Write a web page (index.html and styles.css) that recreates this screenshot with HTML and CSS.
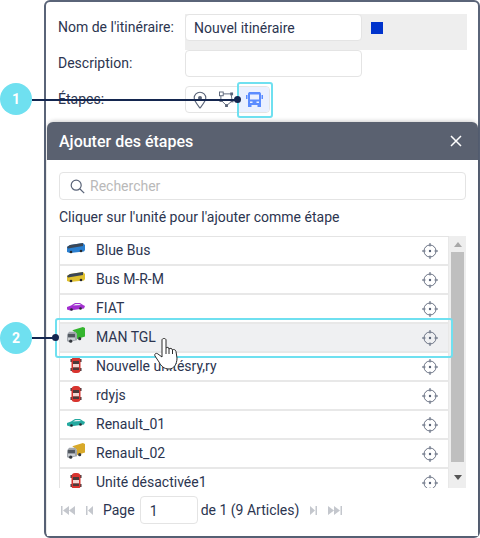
FILE: index.html
```html
<!doctype html>
<html lang="fr">
  <head>
    <meta charset="UTF-8" />
    <title>Ajouter des étapes</title>
    <link rel="stylesheet" href="styles.css">
  </head>

  <body>
    <svg class="defs" width="0" height="0">
      <symbol id="target" viewBox="0 0 16 16">
        <circle cx="8" cy="8" r="6" fill="none" stroke="#6a7284" stroke-width="1" />
        <circle cx="8" cy="8" r="1.2" fill="#5a6478" />
        <path d="M8 0v3.5M8 12.5V16M0 8h3.5M12.5 8H16" stroke="#5a6478" stroke-width="1" />
      </symbol>
      <symbol id="car-top" viewBox="0 0 12 18">
        <rect x="0.500" y="3" width="1.500" height="3" fill="#33373d" />
        <rect x="10" y="3" width="1.500" height="3" fill="#33373d" />
        <rect x="0.500" y="12" width="1.500" height="3" fill="#33373d" />
        <rect x="10" y="12" width="1.500" height="3" fill="#33373d" />
        <rect x="1.500" y="1" width="9" height="16" rx="3.500" fill="#d8342f" />
        <rect x="3" y="5" width="6" height="3" fill="#4b3a3a" />
        <rect x="3" y="8" width="6" height="3.500" fill="#f3d6d2" />
        <rect x="3" y="11.500" width="6" height="2.500" fill="#4b3a3a" />
      </symbol>
      <symbol id="truck" viewBox="0 0 17 15">
        <path d="M5 3L15 0l2 1v8L9 11.500V6z" fill="var(--load)" />
        <path d="M0 7l2-2.500h6L9.500 7v5.500L1 14l-1-1z" fill="#a2a7ae" />
        <rect x="1" y="6.500" width="6.500" height="3" fill="#50565e" />
        <rect x="1" y="10.500" width="6.500" height="1.500" fill="#d5d8dc" />
        <circle cx="3.500" cy="13.300" r="1.500" fill="#33373d" />
        <circle cx="12" cy="11" r="1.500" fill="#33373d" />
      </symbol>
      <symbol id="bus" viewBox="0 0 18 12">
        <path d="M0 5l3-2 13-2 2 2v5l-1 1.500-14 1.500-3-1z" fill="var(--body)" />
        <path d="M0 5l3-2 13-2v3L1 6.500z" fill="#3a4656" />
        <circle cx="4" cy="10" r="1.300" fill="#25282d" />
        <circle cx="14" cy="9" r="1.300" fill="#25282d" />
      </symbol>
      <symbol id="car-side" viewBox="0 0 18 10">
        <path d="M0 6l4-1.500L8 2h5l3 2 2 1-1 2.500L3 9.500 0 8.500z" fill="var(--body)" />
        <path d="M6 4.500L8.500 3h4l1.500 1z" fill="#e8f0f4" />
        <circle cx="4.500" cy="8.500" r="1.300" fill="#25282d" />
        <circle cx="13.500" cy="7.500" r="1.300" fill="#25282d" />
      </symbol>
    </svg>

    <div class="frame">
      <form class="route-form">
        <div class="form-row form-row--name">
          <label class="form-label">Nom de l'itinéraire:</label>
          <div class="name-band">
            <div class="text-field">Nouvel itinéraire</div>
            <span class="color-square"></span>
          </div>
        </div>
        <div class="form-row form-row--desc">
          <label class="form-label">Description:</label>
          <div class="text-field"></div>
        </div>
        <div class="form-row">
          <label class="form-label">Étapes:</label>
          <div class="step-group">
            <span class="step-btn step-btn--pin">
              <svg width="14" height="18" viewBox="0 0 14 18">
                <path d="M7 17C4 13 1.200 10 1.200 7a5.800 5.800 0 0 1 11.600 0C12.800 10 10 13 7 17z" fill="none" stroke="#5a6478" stroke-width="1.100" />
                <circle cx="7" cy="7" r="2" fill="#5a6478" />
              </svg>
            </span>
            <span class="step-btn">
              <svg width="15" height="17" viewBox="0 0 16 17">
                <path d="M2 2.500h11M2 4v5l6 6 6-5-1-7" fill="none" stroke="#5a6478" stroke-width="1" />
                <rect x="0.500" y="0.500" width="4" height="4" fill="#fff" stroke="#5a6478" />
                <rect x="12" y="1" width="3" height="3" fill="#5a6478" />
                <rect x="0.500" y="8" width="3" height="3" fill="#5a6478" />
                <rect x="6.500" y="13.500" width="3" height="3" fill="#5a6478" />
                <rect x="12.500" y="8.500" width="3" height="3" fill="#5a6478" />
              </svg>
            </span>
            <span class="step-btn step-btn--active">
              <svg width="17" height="15" viewBox="0 0 17 15">
                <path d="M3 0h11l1 1.500V15h-3.500v-2h-6v2H2V1.500zM4 2.500V7.500h9V2.500zM4 9.500v1.500h2.500V9.500zM10.500 9.500v1.500H13V9.500z" fill="#5b8cff" fill-rule="evenodd" />
                <path d="M0 3h1.500v4H0zM15.500 3H17v4h-1.500z" fill="#5b8cff" />
              </svg>
            </span>
          </div>
        </div>
      </form>

      <section class="dialog">
        <header class="dialog-head">
          <h2 class="dialog-title">Ajouter des étapes</h2>
          <svg class="dialog-close" width="12" height="12" viewBox="0 0 12 12">
            <path d="M1 1l10 10M11 1L1 11" stroke="#fff" stroke-width="1.500" />
          </svg>
        </header>

        <div class="dialog-body">
          <div class="search">
            <svg width="15" height="15" viewBox="0 0 15 15">
              <circle cx="6.200" cy="6.200" r="5" fill="none" stroke="#5a6478" stroke-width="1.200" />
              <path d="M10 10l4.200 4.200" stroke="#5a6478" stroke-width="1.200" />
            </svg>
            <span>Rechercher</span>
          </div>

          <p class="hint">Cliquer sur l'unité pour l'ajouter comme étape</p>

          <div class="unit-list">
            <ul class="units">
              <li class="unit">
                <svg class="unit-icon" style="--body:#2a7fd0"><use href="#bus" /></svg>
                <span class="unit-name">Blue Bus</span>
                <svg class="unit-target"><use href="#target" /></svg>
              </li>
              <li class="unit">
                <svg class="unit-icon" style="--body:#e0c02e"><use href="#bus" /></svg>
                <span class="unit-name">Bus M-R-M</span>
                <svg class="unit-target"><use href="#target" /></svg>
              </li>
              <li class="unit">
                <svg class="unit-icon" style="--body:#a22fd0"><use href="#car-side" /></svg>
                <span class="unit-name">FIAT</span>
                <svg class="unit-target"><use href="#target" /></svg>
              </li>
              <li class="unit unit--hover">
                <svg class="unit-icon" style="--load:#35b52f"><use href="#truck" /></svg>
                <span class="unit-name">MAN TGL</span>
                <svg class="unit-target"><use href="#target" /></svg>
              </li>
              <li class="unit">
                <svg class="unit-icon unit-icon--top"><use href="#car-top" /></svg>
                <span class="unit-name">Nouvelle unitésry,ry</span>
                <svg class="unit-target"><use href="#target" /></svg>
              </li>
              <li class="unit">
                <svg class="unit-icon unit-icon--top"><use href="#car-top" /></svg>
                <span class="unit-name">rdyjs</span>
                <svg class="unit-target"><use href="#target" /></svg>
              </li>
              <li class="unit">
                <svg class="unit-icon" style="--body:#25a9a0"><use href="#car-side" /></svg>
                <span class="unit-name">Renault_01</span>
                <svg class="unit-target"><use href="#target" /></svg>
              </li>
              <li class="unit">
                <svg class="unit-icon" style="--load:#d8a92a"><use href="#truck" /></svg>
                <span class="unit-name">Renault_02</span>
                <svg class="unit-target"><use href="#target" /></svg>
              </li>
              <li class="unit">
                <svg class="unit-icon unit-icon--top"><use href="#car-top" /></svg>
                <span class="unit-name">Unité désactivée1</span>
                <svg class="unit-target"><use href="#target" /></svg>
              </li>
            </ul>
            <div class="scrollbar">
              <span class="scroll-arrow scroll-arrow--up"></span>
              <span class="scroll-thumb"></span>
              <span class="scroll-arrow scroll-arrow--down"></span>
            </div>
          </div>

          <div class="pager">
            <svg class="pager-icon pager-icon--wide" viewBox="0 0 14 9"><path d="M0 0h1.500v9H0zM8 0v9L2 4.500zM14 0v9L8 4.500z" /></svg>
            <svg class="pager-icon pager-icon--prev" viewBox="0 0 7 9"><path d="M0 0h1.500v9H0zM7 0v9L2 4.500z" /></svg>
            <span class="pager-page">Page</span>
            <div class="pager-input">1</div>
            <span class="pager-total">de 1 (9 Articles)</span>
            <svg class="pager-icon pager-icon--next" viewBox="0 0 7 9"><path d="M7 0H5.500v9H7zM0 0v9l5-4.500z" /></svg>
            <svg class="pager-icon pager-icon--wide" viewBox="0 0 14 9"><path d="M14 0h-1.500v9H14zM6 0v9l6-4.500zM0 0v9l6-4.500z" /></svg>
          </div>
        </div>
      </section>
    </div>

    <!-- callouts drawn over the screenshot -->
    <div class="mark mark--steps"></div>
    <div class="mark mark--row"></div>

    <span class="badge badge--one">1</span>
    <span class="leader leader--one"></span>
    <span class="dot dot--one"></span>

    <span class="badge badge--two">2</span>
    <span class="leader leader--two"></span>
    <span class="dot dot--two"></span>

    <svg class="hand" width="24" height="32" viewBox="0 0 24 32">
      <path d="M8 2C8 0 12 0 12 2V10C13 9 15 9 15 11C16 10 18 10 18.500 12C19.500 11 21.500 11.500 22 13.500L23 20C23 26 20 31 15 31C10 31 7 28 5 24L1 18C0 16 2 14.500 4 16L8 19Z" fill="#fff" stroke="#2a2a2a" stroke-width="1" />
      <path d="M12 10V16M15 11V16M18.500 12V16" stroke="#2a2a2a" stroke-width="1" fill="none" />
    </svg>
  </body>
</html>
```

FILE: styles.css
```css
* {
  box-sizing: border-box;
}

:root {
  --slate: #5a6478;
  --cyan: #6fe0f0;
  --navy: #14264f;
  --line: #e4e4e4;
  --text: #2c3550;
}

body {
  position: relative;
  width: 480px;
  height: 538px;
  margin: 0;
  overflow: hidden;
  background-color: #fff;
  color: var(--text);
  font-family: Roboto, sans-serif;
  font-size: 14px;
}

.defs {
  position: absolute;
}

.frame {
  display: flex;
  flex-direction: column;
  width: 436px;
  height: 538px;
  margin-left: 44px;
  border: 2px solid var(--slate);
  border-radius: 6px;
}

.route-form {
  height: 120px;
  padding: 12px 0 0 12px;
}

.form-row {
  display: flex;
  height: 27px;
}

.form-row--name {
  height: 36px;
}

.form-row--desc {
  margin-bottom: 9px;
}

.form-label {
  width: 127px;
  padding-top: 4px;
  line-height: 18px;
}

.name-band {
  display: flex;
  align-items: flex-start;
  gap: 9px;
  width: 282px;
  background-color: #eeeeee;
}

.color-square {
  width: 12px;
  height: 12px;
  margin-top: 8px;
  background-color: #0033cc;
}

.text-field {
  width: 177px;
  height: 27px;
  padding: 0 8px;
  background-color: #fff;
  border: 1px solid var(--line);
  border-radius: 4px;
  line-height: 26px;
}

.step-group {
  display: flex;
  height: 27px;
  border: 1px solid var(--line);
  border-radius: 4px;
}

.step-btn {
  display: flex;
  align-items: center;
  justify-content: center;
  width: 26px;
}

.step-btn--pin {
  width: 27px;
}

.step-btn--active {
  width: 30px;
  background-color: #eaf0ff;
  border-radius: 0 3px 3px 0;
}

.dialog {
  display: flex;
  flex-direction: column;
  flex: 1;
  margin-left: 1px;
  background-color: #fff;
  border-radius: 8px 8px 0 0;
  box-shadow: 0 -1px 4px rgba(0, 0, 0, 0.2);
}

.dialog-head {
  display: flex;
  align-items: center;
  justify-content: space-between;
  height: 38px;
  padding: 0 16px 0 12px;
  background-color: #5a6170;
  border-radius: 6px 6px 0 0;
}

.dialog-title {
  margin: 0;
  color: #fff;
  font-size: 16px;
  font-weight: 500;
}

.dialog-body {
  padding: 12px 12px 0;
}

.search {
  display: flex;
  align-items: center;
  gap: 5px;
  width: 407px;
  height: 28px;
  padding-left: 10px;
  border: 1px solid var(--line);
  border-radius: 4px;
  color: #b9b9b9;
}

.hint {
  height: 36px;
  margin: 0;
  padding-top: 8px;
  line-height: 18px;
}

.unit-list {
  display: flex;
  width: 407px;
  height: 252px;
  overflow: hidden;
}

.units {
  flex: 1;
  margin: 0;
  padding: 0;
  list-style: none;
  border-left: 1px solid var(--line);
  border-top: 1px solid var(--line);
}

.unit {
  display: flex;
  align-items: center;
  height: 29px;
  padding: 0 10px 2px 7px;
  border-bottom: 2px solid #e8e8e8;
  border-right: 1px solid #e8e8e8;
}

.unit--hover {
  background-color: #eff0f2;
}

.unit-icon {
  width: 18px;
  height: 18px;
  margin-bottom: 3px;
}

.unit-icon--top {
  margin-top: -1px;
  margin-bottom: 0;
}

.unit-name {
  flex: 1;
  margin-left: 11px;
}

.unit-target {
  width: 16px;
  height: 16px;
  margin-top: 2px;
}

.scrollbar {
  display: flex;
  flex-direction: column;
  align-items: center;
  width: 17px;
  padding-top: 6px;
  background-color: #eeeeee;
}

.scroll-thumb {
  width: 13px;
  height: 210px;
  margin-top: 5px;
  background-color: #bfbfbf;
}

.scroll-arrow {
  width: 0;
  height: 0;
  border-left: 4px solid transparent;
  border-right: 4px solid transparent;
}

.scroll-arrow--up {
  border-bottom: 5px solid #a8a8a8;
}

.scroll-arrow--down {
  margin-top: 13px;
  border-top: 5px solid #555;
}

.pager {
  display: flex;
  align-items: center;
  height: 28px;
  margin-top: 8px;
  padding-left: 2px;
}

.pager-icon {
  height: 9px;
  fill: #c4c7cd;
}

.pager-icon--wide {
  width: 14px;
}

.pager-icon--prev,
.pager-icon--next {
  width: 7px;
}

.pager-icon--prev {
  margin-left: 11px;
}

.pager-page {
  margin-left: 10px;
}

.pager-input {
  width: 58px;
  height: 28px;
  margin-left: 5px;
  padding-left: 9px;
  border: 1px solid var(--line);
  border-radius: 4px;
  line-height: 28px;
}

.pager-total {
  margin-left: 3px;
}

.pager-icon--next {
  margin: 0 11px 0 11px;
}

/* callouts */
.mark {
  position: absolute;
  border: 2px solid var(--cyan);
  border-radius: 3px;
}

.mark--steps {
  left: 237px;
  top: 82px;
  width: 36px;
  height: 36px;
}

.mark--row {
  left: 55px;
  top: 318px;
  width: 398px;
  height: 40px;
}

.badge {
  position: absolute;
  left: 0;
  width: 32px;
  height: 32px;
  background-color: var(--cyan);
  border-radius: 50%;
  color: #fff;
  font-size: 14px;
  font-weight: 700;
  line-height: 32px;
  text-align: center;
}

.badge--one {
  top: 83px;
}

.badge--two {
  top: 322px;
}

.leader {
  position: absolute;
  left: 32px;
  height: 2px;
  background-color: var(--navy);
}

.leader--one {
  top: 99px;
  width: 206px;
}

.leader--two {
  top: 337px;
  width: 22px;
}

.dot {
  position: absolute;
  width: 7px;
  height: 7px;
  background-color: var(--navy);
  border-radius: 50%;
}

.dot--one {
  left: 234px;
  top: 96px;
}

.dot--two {
  left: 52px;
  top: 334px;
}

.hand {
  position: absolute;
  left: 154px;
  top: 338px;
}
```
